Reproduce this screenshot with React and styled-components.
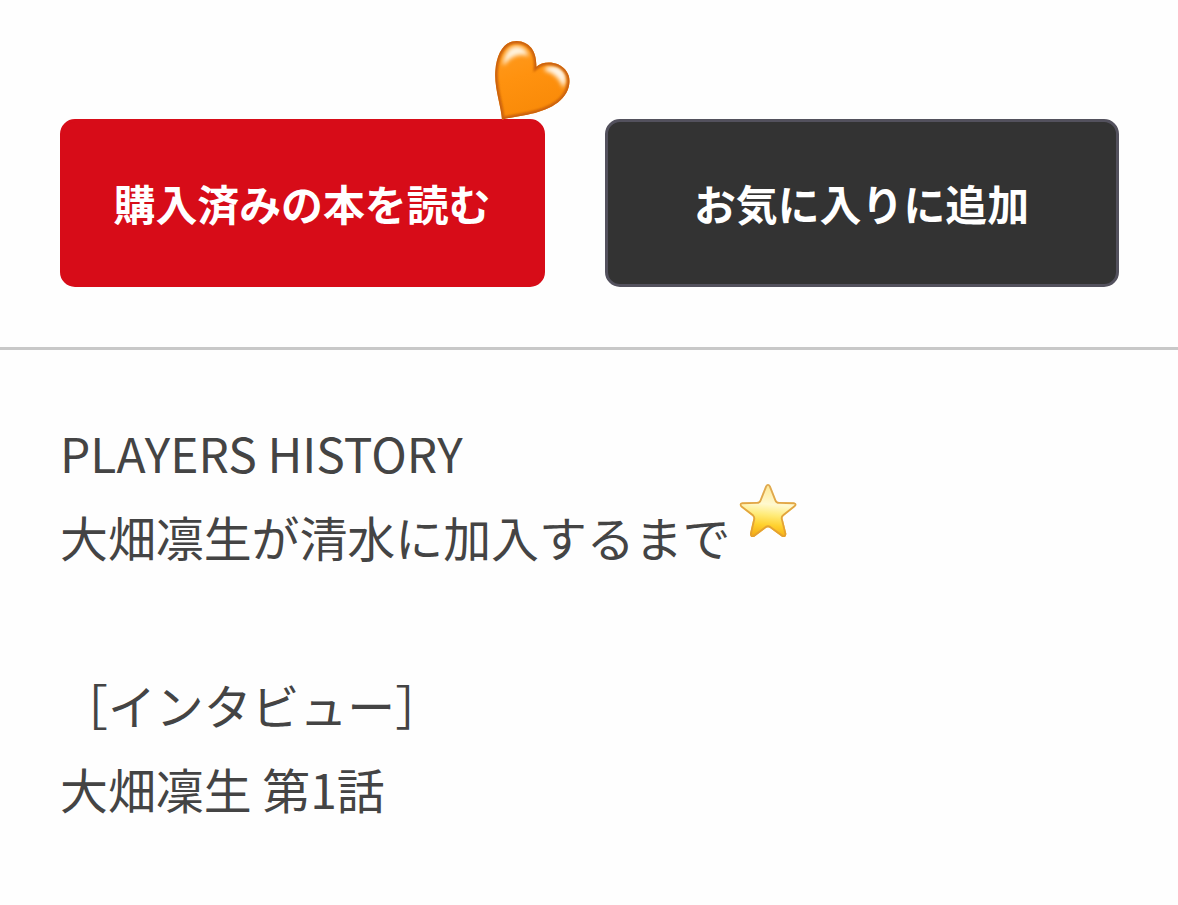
import React from 'react';
import styled, { createGlobalStyle } from 'styled-components';

const GlobalStyle = createGlobalStyle`
  body {
    margin: 0;
    background: #fefefe;
    font-family: "Noto Sans CJK JP", "Noto Sans", sans-serif;
    color: #444;
  }
`;

const Page = styled.main`
  min-height: 905px;
  box-sizing: border-box;
  overflow: hidden;
`;

const Actions = styled.section`
  display: flex;
  gap: 60px;
  padding: 119px 59px 60px 60px;
  border-bottom: 3px solid #c8c8c8;
`;

const ActionItem = styled.div`
  position: relative;
  display: flex;
  flex: 0 0 ${props => props.$width}px;
`;

const Button = styled.button`
  flex: 1;
  height: 168px;
  padding: 0 1px 1px 0;
  box-sizing: border-box;
  border: 3px solid ${props => props.$border};
  border-radius: 15px;
  background: ${props => props.$color};
  color: #fff;
  font-family: inherit;
  font-size: 41.9px;
  font-weight: 700;
  line-height: 60px;
  white-space: nowrap;
  cursor: pointer;
`;

const Description = styled.section`
  padding: 60px 60px 0;
  font-size: 47.9px;
  line-height: 84px;
`;

const Line = styled.p`
  min-height: 84px;
  margin: 0;
  white-space: pre;
`;

const Titled = styled.span`
  position: relative;
`;

const HeartIcon = styled.svg`
  position: absolute;
  top: -89px;
  left: 420px;
  width: 110px;
  height: 110px;
  pointer-events: none;
`;

const StarIcon = styled.svg`
  position: absolute;
  top: -30px;
  left: 665px;
  width: 90px;
  height: 80px;
`;

const heartPath = 'M66 269 C64 229 42 173 46 123 C50 67 74 33 110 33 C150 34 171 66 169 110 C184 97 210 93 234 103 C260 115 272 139 268 162 C260 214 205 242 142 254 C116 259 91 262 66 269 Z';
const starPath = 'M121 45 Q129 33 137 45 L154 88 Q156 93 162 93 L207 94 Q221 98 210 108 L176 135 Q172 138 173 143 L184 188 Q183 202 171 197 L134 170 Q129 167 124 170 L88 197 Q76 202 75 188 L85 144 Q86 139 82 135 L47 108 Q39 97 52 94 L96 93 Q102 93 104 88 Z';

const Heart = () => (
  <HeartIcon viewBox="0 0 330 330" aria-hidden="true">
    <defs>
      <linearGradient id="heartFill" x1="0" y1="0" x2="0.3" y2="1">
        <stop offset="0" stopColor="#ff9d23" />
        <stop offset="0.5" stopColor="#ff920f" />
        <stop offset="1" stopColor="#f98a08" />
      </linearGradient>
      <filter id="soft" x="-40%" y="-40%" width="180%" height="180%">
        <feGaussianBlur stdDeviation="7" />
      </filter>
      <filter id="edge" x="-10%" y="-10%" width="120%" height="120%">
        <feGaussianBlur stdDeviation="3.5" />
      </filter>
      <clipPath id="heartClip"><path d={heartPath} /></clipPath>
    </defs>
    <path d={heartPath} fill="url(#heartFill)" />
    <g clipPath="url(#heartClip)">
      <path d="M70 104 Q78 53 110 50 Q136 52 143 76 Q104 62 70 104" fill="#fff3dd" stroke="#fff3dd" strokeWidth="4" filter="url(#soft)" />
      <path d="M195 118 Q234 100 252 132 Q258 146 250 164 Q234 129 195 118" fill="#fff5e5" stroke="#fff5e5" strokeWidth="8" filter="url(#soft)" />
      <path d={heartPath} fill="none" stroke="#c9600b" strokeWidth="15" filter="url(#edge)" />
    </g>
  </HeartIcon>
);

const Star = () => (
  <StarIcon viewBox="0 0 270 240" aria-hidden="true">
    <defs>
      <linearGradient id="starFill" x1="0.55" y1="0" x2="0.45" y2="1">
        <stop offset="0" stopColor="#ffe790" />
        <stop offset="0.38" stopColor="#fff9cf" />
        <stop offset="0.58" stopColor="#ffeb78" />
        <stop offset="0.78" stopColor="#ffd02c" />
        <stop offset="1" stopColor="#f3a914" />
      </linearGradient>
      <linearGradient id="starEdge" x1="0" y1="0" x2="0" y2="1">
        <stop offset="0" stopColor="#dfaa55" />
        <stop offset="1" stopColor="#e5a02c" />
      </linearGradient>
      <filter id="starSoft"><feGaussianBlur stdDeviation="2" /></filter>
      <clipPath id="starClip"><path d={starPath} /></clipPath>
    </defs>
    <path d={starPath} fill="url(#starFill)" />
    <g clipPath="url(#starClip)">
      <path d={starPath} fill="none" stroke="url(#starEdge)" strokeWidth="11" filter="url(#starSoft)" />
    </g>
  </StarIcon>
);

const App = () => {
  return (
    <Page>
      <GlobalStyle />
      <Actions>
        <ActionItem $width={485}>
          <Button $color="#d70c18" $border="#d70c18">購入済みの本を読む</Button>
          <Heart />
        </ActionItem>
        <ActionItem $width={514}>
          <Button $color="#333" $border="#53515d">お気に入りに追加</Button>
        </ActionItem>
      </Actions>
      <Description>
        <Line>PLAYERS HISTORY</Line>
        <Line>
          <Titled>
            大畑凛生が清水に加入するまで
            <Star />
          </Titled>
        </Line>
        <Line />
        <Line>［インタビュー］</Line>
        <Line>大畑凜生 第1話</Line>
      </Description>
    </Page>
  );
};

export default App;
